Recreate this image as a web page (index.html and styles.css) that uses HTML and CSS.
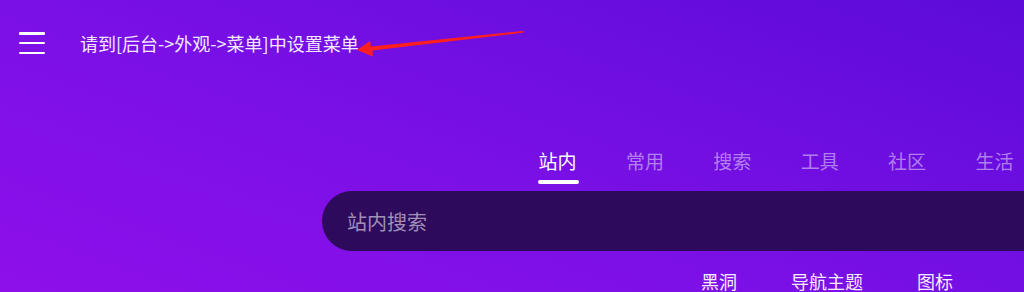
FILE: index.html
```html
<!DOCTYPE html>
<html lang="zh">
<head>
<meta charset="utf-8">
<link rel="stylesheet" href="styles.css">
</head>
<body>
<div class="page">
  <header class="topbar">
    <button class="burger" aria-label="menu">
      <span></span><span></span><span></span>
    </button>
    <div class="menu-tip">请到[后台-&gt;外观-&gt;菜单]中设置菜单</div>
    <svg class="arrow" width="200" height="40" viewBox="340 20 200 40">
      <polygon points="357,50 370,41 371,46.6 523,31 524,32.6 372.4,50.6 373,56.5" fill="#ff1f1f"/>
    </svg>
  </header>
  <section class="search-area">
    <nav class="tabs">
      <a class="tab active">站内</a>
      <a class="tab">常用</a>
      <a class="tab">搜索</a>
      <a class="tab">工具</a>
      <a class="tab">社区</a>
      <a class="tab">生活</a>
    </nav>
    <div class="search-box">
      <span class="placeholder">站内搜索</span>
    </div>
    <div class="links">
      <a class="link">黑洞</a>
      <a class="link">导航主题</a>
      <a class="link">图标</a>
    </div>
  </section>
</div>
</body>
</html>
```
FILE: styles.css
```css
* { box-sizing: border-box; }
html, body {
  margin: 0;
  padding: 0;
  width: 1024px;
  height: 292px;
  overflow: hidden;
}
body {
  font-family: "Noto Sans CJK SC", "Noto Sans", sans-serif;
  background: linear-gradient(20deg, #8e0fea 0%, #7a10e6 45%, #5c0bd9 100%);
  color: #fff;
}
.page {
  width: 1024px;
  height: 292px;
  position: relative;
  overflow: hidden;
}
.topbar {
  display: flex;
  align-items: center;
  height: 86px;
  padding-left: 19px;
  position: relative;
}
.burger {
  width: 26px;
  height: 22px;
  padding: 0;
  border: 0;
  background: transparent;
  display: flex;
  flex-direction: column;
  justify-content: space-between;
}
.burger span {
  display: block;
  height: 2.5px;
  width: 26px;
  background: #fff;
  border-radius: 1px;
}
.menu-tip {
  margin-left: 35px;
  font-size: 18px;
  color: #f4e8ff;
}
.arrow {
  position: absolute;
  left: 340px;
  top: 20px;
}
.search-area {
  display: flex;
  flex-direction: column;
  padding-left: 322px;
}
.tabs {
  display: flex;
  gap: 50.4px;
  padding-left: 217px;
  padding-top: 63px;
  height: 105px;
}
.tab {
  font-size: 19px;
  line-height: 24px;
  color: rgba(255, 255, 255, 0.47);
  position: relative;
  height: 36px;
  width: 37px;
  display: flex;
  justify-content: center;
  white-space: nowrap;
}
.tab.active {
  color: #fff;
}
.tab.active::after {
  content: "";
  position: absolute;
  left: -1px;
  right: -3px;
  bottom: 1px;
  height: 4px;
  border-radius: 2px;
  background: #fff;
}
.search-box {
  width: 800px;
  height: 60px;
  border-radius: 30px;
  background: #2d0a5b;
  display: flex;
  align-items: center;
  padding-left: 25px;
}
.placeholder {
  font-size: 20px;
  color: #a08fb8;
}
.links {
  display: flex;
  gap: 54px;
  padding-left: 379px;
  padding-top: 21px;
}
.link {
  font-size: 18px;
  line-height: 18px;
  color: #f6eaff;
}
```
